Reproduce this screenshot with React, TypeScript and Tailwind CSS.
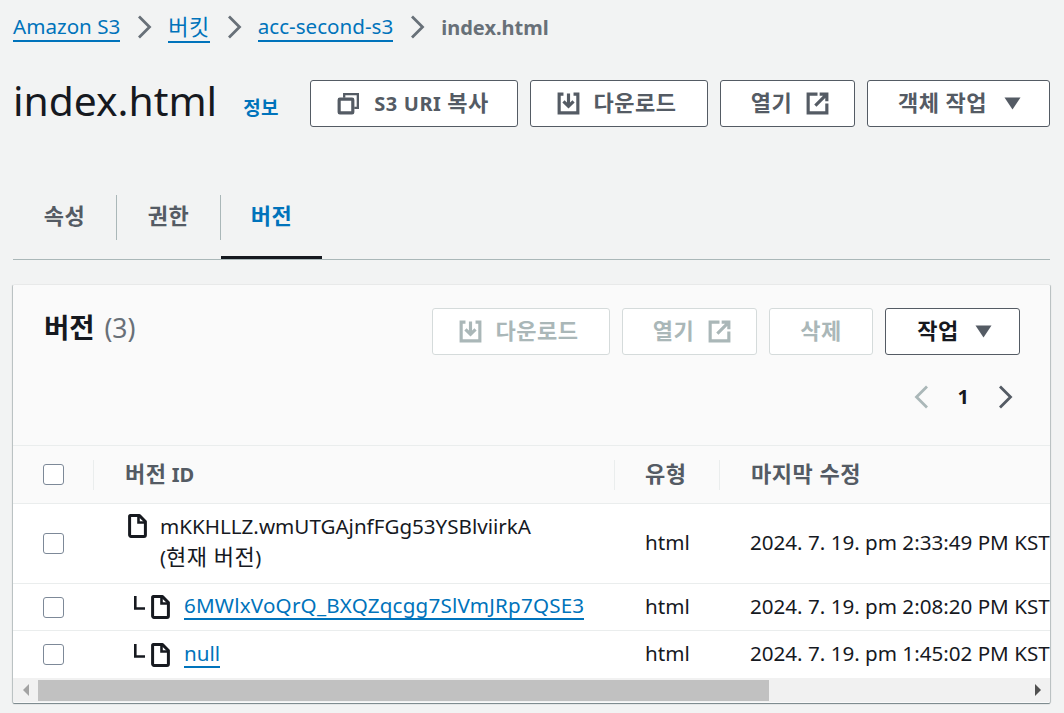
import type { ReactNode } from "react";

function CopyIcon() {
  return (
    <svg width="23" height="23" viewBox="0 0 16 16" fill="none" stroke="currentColor" strokeWidth="2.2">
      <rect x="1.5" y="5" width="9.5" height="9.5" rx="0.5" />
      <path d="M5 4V1.5h9.5V11H12" strokeWidth="1.6" />
    </svg>
  );
}

function DownloadIcon() {
  return (
    <svg width="23" height="23" viewBox="0 0 16 16" fill="none" stroke="currentColor" strokeWidth="2.2">
      <path d="M4.5 1.5H1.5V14.5H14.5V1.5H11.5" />
      <path d="M8 1V9.5M4.5 6.5L8 10L11.5 6.5" />
    </svg>
  );
}

function ExternalIcon() {
  return (
    <svg width="23" height="23" viewBox="0 0 16 16" fill="none" stroke="currentColor" strokeWidth="2.2">
      <path d="M8 1.5H1.5V14.5H14.5V8" />
      <path d="M6.5 9.5L14.5 1.5M9.5 1.5H14.5V6.5" />
    </svg>
  );
}

function Caret() {
  return (
    <svg width="17" height="13" viewBox="0 0 17 13" fill="currentColor">
      <path d="M0.5 0.5H16.5L8.5 12.5Z" />
    </svg>
  );
}

function Chevron({ className }: { className: string }) {
  return (
    <svg width="16" height="24" viewBox="0 0 16 24" fill="none" stroke="currentColor" strokeWidth="2.8" className={className}>
      <path d="M3 1.5L13.5 12L3 22.5" />
    </svg>
  );
}

function FileIcon() {
  return (
    <svg width="19" height="24" viewBox="0 0 19 24" fill="none" stroke="#16191f" strokeWidth="3" className="shrink-0">
      <path d="M2 1.6H11.5L17.4 7.5V21a1.4 1.4 0 0 1-1.4 1.4H3A1.4 1.4 0 0 1 1.6 21V2Z" strokeLinejoin="round" />
      <path d="M10.5 1.5V8.5H17.5" strokeWidth="2.6" />
    </svg>
  );
}

function VersionIcon() {
  return (
    <div className="flex items-start gap-[6px]">
      <svg width="11" height="14" viewBox="0 0 11 14" fill="none" stroke="#16191f" strokeWidth="2.6" className="mt-[1px]">
        <path d="M1.3 0V12.5H11" />
      </svg>
      <FileIcon />
    </div>
  );
}

function Checkbox() {
  return <div className="h-[21px] w-[21px] rounded-[3px] border-[1.5px] border-[#7d8998] bg-white" />;
}

// Korean runs are set larger than Latin: the reference's hangul is wider than Noto's at the same size
function Ko({ children }: { children: ReactNode }) {
  return <span className="text-[22px] tracking-[0.5px]">{children}</span>;
}

function Button({ children, disabled, className }: { children: ReactNode; disabled?: boolean; className: string }) {
  return (
    <button
      className={`flex h-[47px] items-center justify-center rounded-[3px] border bg-white text-[20px] font-bold ${
        disabled ? "border-[#d5dbdb] text-[#aab7b8]" : "border-[#545b64] text-[#545b64]"
      } ${className}`}
    >
      {children}
    </button>
  );
}

const rows = [
  { date: "2024. 7. 19. pm 2:33:49 PM KST", height: "h-[80px]" },
  { date: "2024. 7. 19. pm 2:08:20 PM KST", height: "h-[47px]" },
  { date: "2024. 7. 19. pm 1:45:02 PM KST", height: "h-[47px]" },
];

export default function App() {
  return (
    <div
      className="h-[713px] w-[1064px] overflow-hidden bg-[#f2f3f3] pl-[13px] text-[20.6px] text-[#16191f]"
      style={{ fontFamily: '"Noto Sans", "Noto Sans CJK KR", sans-serif' }}
    >
      {/* Breadcrumbs */}
      <div className="flex h-[54px] items-center leading-[27px]">
        <a className="mt-[1px] border-b-[2px] border-[#0073bb] text-[#0073bb]">Amazon S3</a>
        <Chevron className="mx-[16px] text-[#687078]" />
        <a className="mt-[1px] border-b-[2px] border-[#0073bb] text-[#0073bb]">
          <Ko>버킷</Ko>
        </a>
        <Chevron className="mx-[16px] text-[#687078]" />
        <a className="mt-[1px] border-b-[2px] border-[#0073bb] text-[#0073bb]">acc-second-s3</a>
        <Chevron className="mx-[16px] text-[#687078]" />
        <span className="text-[20px] font-bold text-[#687078]">index.html</span>
      </div>

      {/* Title and actions */}
      <div className="mt-[26px] mr-[14px] flex h-[47px] items-center">
        <h1 className="-mt-[6px] text-[40.8px] leading-[47px] font-normal">index.html</h1>
        <a className="mt-[10px] ml-[26px] text-[19px] font-bold tracking-[0.3px] text-[#0073bb]">정보</a>
        <div className="ml-auto flex gap-[12px]">
          <Button className="w-[208px] gap-[14px] pr-[2px]">
            <CopyIcon />
            <span className="-mt-[3px] tracking-[0.6px]">
              S3 URI <Ko>복사</Ko>
            </span>
          </Button>
          <Button className="w-[178px] gap-[14px] pr-[5px]">
            <DownloadIcon />
            <span className="-mt-[3px]">
              <Ko>다운로드</Ko>
            </span>
          </Button>
          <Button className="w-[135px] gap-[14px] pl-[5px]">
            <span className="-mt-[3px]">
              <Ko>열기</Ko>
            </span>
            <ExternalIcon />
          </Button>
          <Button className="w-[183px] gap-[17px] pl-[2px]">
            <span className="-mt-[3px]">
              <Ko>객체 작업</Ko>
            </span>
            <Caret />
          </Button>
        </div>
      </div>

      {/* Tabs */}
      <div className="mt-[45px] mr-[14px] flex h-[88px] items-end border-b border-[#aab7b8]">
        <div className="mb-[19px] flex h-[45px] w-[104px] items-center justify-center border-r border-[#aab7b8] pb-[4px] font-bold text-[#545b64]">
          <Ko>속성</Ko>
        </div>
        <div className="mb-[19px] flex h-[45px] w-[104px] items-center justify-center border-r border-[#aab7b8] pb-[4px] font-bold text-[#545b64]">
          <Ko>권한</Ko>
        </div>
        <div className="flex h-[64px] w-[101px] items-start justify-center border-b-[3px] border-[#16191f] pt-[4px] font-bold text-[#0073bb]">
          <Ko>버전</Ko>
        </div>
      </div>

      {/* Versions card */}
      <div className="mt-[25px] mr-[14px] h-[418px] overflow-hidden rounded-[1px] bg-[#fafafa] shadow-[0_1px_1px_0_rgba(0,28,36,0.5),1px_0_1px_0_rgba(0,28,36,0.2),-1px_0_1px_0_rgba(0,28,36,0.2)]">
        <div className="flex h-[161px] flex-col border-b border-[#eaeded]">
          <div className="mt-[23px] flex items-start pr-[30px] pl-[31px]">
            <h2 className="mt-[1px] text-[26px] leading-[38px] font-bold">
              <span className="text-[27.5px]">버전</span>{" "}
              <span className="ml-[3px] text-[26.5px] font-normal text-[#687078]">(3)</span>
            </h2>
            <div className="ml-auto flex gap-[12px]">
              <Button disabled className="w-[178px] gap-[14px] pr-[5px]">
                <DownloadIcon />
                <span className="-mt-[3px]">
                  <Ko>다운로드</Ko>
                </span>
              </Button>
              <Button disabled className="w-[135px] gap-[14px] pl-[5px]">
                <span className="-mt-[3px]">
                  <Ko>열기</Ko>
                </span>
                <ExternalIcon />
              </Button>
              <Button disabled className="w-[104px]">
                <span className="-mt-[3px]">
                  <Ko>삭제</Ko>
                </span>
              </Button>
              <Button className="w-[135px] gap-[16px] pl-[4px]">
                <span className="-mt-[3px] text-[#16191f]">
                  <Ko>작업</Ko>
                </span>
                <Caret />
              </Button>
            </div>
          </div>
          <div className="mt-[27px] flex items-center justify-end pr-[37px]">
            <Chevron className="rotate-180 text-[#aab7b8]" />
            <span className="mx-[28px] text-[20px] font-bold">1</span>
            <Chevron className="text-[#545b64]" />
          </div>
        </div>

        {/* Table header */}
        <div className="grid h-[58px] grid-cols-[81px_521px_105px_400px] items-center border-b border-[#eaeded] font-bold text-[#545b64]">
          <div className="flex h-[30px] items-center border-r border-[#eaeded] pl-[30px]">
            <Checkbox />
          </div>
          <div className="flex h-[30px] items-center border-r border-[#eaeded] pl-[31px]">
            <span className="-mt-[2px] text-[20px]">
              <Ko>버전</Ko> ID
            </span>
          </div>
          <div className="flex h-[30px] items-center border-r border-[#eaeded] pl-[30px]">
            <span className="-mt-[2px]">
              <Ko>유형</Ko>
            </span>
          </div>
          <div className="flex h-[30px] items-center pl-[31px]">
            <span className="-mt-[2px]">
              <Ko>마지막 수정</Ko>
            </span>
          </div>
        </div>

        {/* Table rows */}
        {rows.map((row, i) => (
          <div
            key={row.date}
            className={`grid grid-cols-[81px_521px_105px_400px] items-center whitespace-nowrap bg-white ${row.height} ${
              i < 2 ? "border-b border-[#eaeded]" : ""
            }`}
          >
            <div className="pl-[30px]">
              <Checkbox />
            </div>
            {i === 0 && (
              <div className="flex gap-[13px] pl-[34px] leading-[30px]">
                <FileIcon />
                <div className="-mt-[3px]">
                  <div>mKKHLLZ.wmUTGAjnfFGg53YSBlviirkA</div>
                  <div>
                    <span className="text-[20px]">(</span>
                    <Ko>현재 버전</Ko>
                    <span className="text-[20px]">)</span>
                  </div>
                </div>
              </div>
            )}
            {i === 1 && (
              <div className="flex items-center gap-[14px] pl-[40px]">
                <VersionIcon />
                <a className="-mt-[2px] border-b-2 border-[#0073bb] leading-[26px] tracking-[0.2px] text-[#0073bb]">
                  6MWlxVoQrQ_BXQZqcgg7SlVmJRp7QSE3
                </a>
              </div>
            )}
            {i === 2 && (
              <div className="flex items-center gap-[14px] pl-[40px]">
                <VersionIcon />
                <a className="-mt-[2px] border-b-2 border-[#0073bb] leading-[26px] text-[#0073bb]">null</a>
              </div>
            )}
            <div className="pb-[2px] pl-[30px]">html</div>
            <div className="pb-[2px] pl-[30px]">{row.date}</div>
          </div>
        ))}

        {/* Horizontal scrollbar */}
        <div className="flex h-[24px] items-center bg-[#f1f1f1]">
          <div className="flex w-[25px] justify-center pl-[1px]">
            <div className="h-0 w-0 border-y-[6px] border-r-[6px] border-y-transparent border-r-[#a3a3a3]" />
          </div>
          <div className="h-[21px] w-[731px] bg-[#c1c1c1]" />
          <div className="ml-auto flex w-[25px] justify-center">
            <div className="h-0 w-0 border-y-[6px] border-l-[6px] border-y-transparent border-l-[#505050]" />
          </div>
        </div>
      </div>
    </div>
  );
}
